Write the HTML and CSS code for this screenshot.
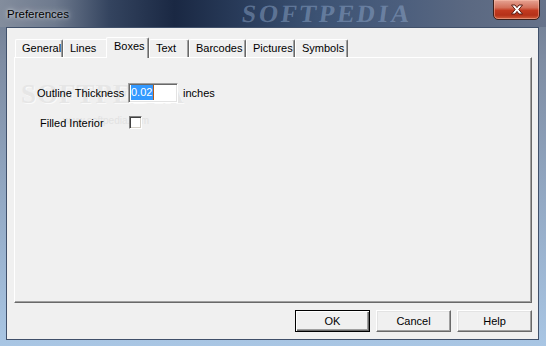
FILE: index.html
```html
<!DOCTYPE html>
<html lang="en">
<head>
    <meta charset="UTF-8">
    <title>Preferences</title>
    <link rel="stylesheet" href="styles.css">
</head>
<body>

    <div class="window">
        <!-- Title bar -->
        <div class="titlebar">
            <span class="title">Preferences</span>
            <span class="brand-mark">SOFTPEDIA</span>
            <div class="close-btn">
                <svg width="14" height="11" viewBox="0 0 14 11">
                    <path d="M1.5 1 L5 1 L7 3.6 L9 1 L12.5 1 L8.8 5.5 L12.5 10 L9 10 L7 7.4 L5 10 L1.5 10 L5.2 5.5 Z" fill="#fff" stroke="#5a1a10" stroke-width="1"/>
                </svg>
            </div>
        </div>

        <div class="client">
            <!-- Tabs -->
            <div class="tabs">
                <div class="tab tab-general">General</div>
                <div class="tab tab-lines">Lines</div>
                <div class="tab tab-boxes active">Boxes</div>
                <div class="tab tab-text">Text</div>
                <div class="tab tab-barcodes">Barcodes</div>
                <div class="tab tab-pictures">Pictures</div>
                <div class="tab tab-symbols">Symbols</div>
            </div>

            <div class="panel">
                <span class="watermark">SOFTPEDIA</span>
                <span class="watermark-url">www.softpedia.com</span>

                <div class="field-row">
                    <label class="field-label">Outline Thickness</label>
                    <div class="textbox"><span class="selected">0.02</span></div>
                    <span class="unit">inches</span>
                </div>

                <div class="check-row">
                    <label class="check-label">Filled Interior</label>
                    <span class="checkbox"></span>
                </div>
            </div>

            <!-- Dialog buttons -->
            <div class="buttons">
                <button class="btn default">OK</button>
                <button class="btn">Cancel</button>
                <button class="btn">Help</button>
            </div>
        </div>
    </div>

</body>
</html>
```

FILE: styles.css
```css
body {
    margin: 0;
    padding: 0;
    width: 546px;
    height: 346px;
    overflow: hidden;
    font-family: 'Liberation Sans', Arial, sans-serif;
    font-size: 11px;
    color: #000;
}
.window {
    width: 546px;
    height: 346px;
    display: flex;
    flex-direction: column;
    background: linear-gradient(to bottom, #6e7b90 0px, #7e8ca2 60px, #93a9c4 200px, #a9c6e4 346px);
}
.titlebar {
    position: relative;
    height: 27px;
    background: linear-gradient(to right, #838d9d 0%, #6e7a8e 10%, #34445f 20%, #1a2843 32%, #2a3d5c 45%, #3c5273 58%, #4a5d7c 72%, #5b6982 86%, #66728a 100%);
    display: flex;
    align-items: center;
}
.title {
    margin-left: 7px;
    font-size: 11.5px;
    color: #000;
    text-shadow: 0 0 6px rgba(255,255,255,0.7), 0 0 3px rgba(255,255,255,0.5);
}
.brand-mark {
    position: absolute;
    left: 242px;
    top: 1px;
    line-height: 26px;
    font-family: 'Liberation Serif', serif;
    font-weight: bold;
    font-size: 25px;
    letter-spacing: 3px;
    color: rgba(150,175,210,0.45);
    transform: skewX(-8deg);
}
.close-btn {
    position: absolute;
    left: 493px;
    top: -1px;
    width: 45px;
    height: 19px;
    border: 1px solid #3b1f1a;
    border-radius: 0 0 5px 5px;
    background: linear-gradient(to bottom, #e6a393 0%, #d3705a 40%, #c23a20 55%, #b53118 80%, #d0603e 100%);
    box-shadow: inset 0 0 0 1px rgba(255,200,180,0.45);
    display: flex;
    align-items: center;
    justify-content: center;
}
.client {
    flex: 1;
    margin: 0 7px 6px 6px;
    background-color: #f0f0f0;
    border: 1px solid #40506a;
    display: flex;
    flex-direction: column;
    padding: 8px 6px 0 7px;
}
.tabs {
    display: flex;
    align-items: flex-end;
    height: 21px;
    padding-left: 1px;
    position: relative;
    z-index: 1;
}
.tab {
    box-sizing: border-box;
    height: 18px;
    line-height: 17px;
    padding-left: 6px;
    border-top: 1px solid #fff;
    border-left: 1px solid #fff;
    border-right: 1px solid #696969;
    box-shadow: inset -1px 0 #a0a0a0;
    border-radius: 2px 2px 0 0;
    white-space: nowrap;
}
.tab.active {
    height: 21px;
    line-height: 17px;
    margin-bottom: -1px;
    background-color: #f0f0f0;
    padding-left: 7px;
}
.tab-general { width: 48px; }
.tab-lines { width: 45px; border-right: none; box-shadow: none; margin-right: -2px; }
.tab-boxes { width: 43px; }
.tab-text { width: 40px; }
.tab-barcodes { width: 57px; }
.tab-pictures { width: 49px; }
.tab-symbols { width: 53px; }
.panel {
    position: relative;
    height: 246px;
    box-sizing: border-box;
    border-top: 1px solid #fff;
    border-left: 1px solid #fff;
    border-right: 1px solid #696969;
    border-bottom: 1px solid #696969;
    box-shadow: inset -1px -1px #a0a0a0;
    padding: 25px 0 0 22px;
}
.watermark {
    position: absolute;
    left: 6px;
    top: 21px;
    font-family: 'Liberation Serif', serif;
    font-weight: bold;
    font-size: 27px;
    letter-spacing: 1px;
    color: #e6e6e6;
    text-shadow: 1px 1px 0 #fafafa;
}
.watermark-url {
    position: absolute;
    left: 48px;
    top: 57px;
    font-size: 10px;
    color: #e2e2e2;
}
.field-row {
    position: relative;
    display: flex;
    align-items: center;
    height: 20px;
}
.field-label {
    width: 91px;
}
.textbox {
    box-sizing: content-box;
    width: 46px;
    height: 17px;
    background: #fff;
    border: 1px solid;
    border-color: #a0a0a0 #fff #fff #a0a0a0;
    box-shadow: inset 1px 1px #696969, inset -1px -1px #e3e3e3;
    padding: 1px 0 0 2px;
}
.selected {
    display: inline-block;
    background-color: #3399ff;
    color: #fff;
    line-height: 15px;
    padding-right: 1px;
    border-right: 1px solid #b35a16;
}
.unit {
    margin-left: 5px;
}
.check-row {
    position: relative;
    display: flex;
    align-items: center;
    margin-top: 13px;
    padding-left: 3px;
    height: 13px;
}
.check-label {
    width: 89px;
}
.checkbox {
    width: 11px;
    height: 11px;
    background: #fff;
    border: 1px solid;
    border-color: #808080 #fff #fff #808080;
    box-shadow: inset 1px 1px #404040, inset -1px -1px #d4d0c8;
}
.buttons {
    display: flex;
    justify-content: flex-end;
    gap: 6px;
    margin-top: 7px;
}
.btn {
    width: 75px;
    height: 22px;
    font-family: 'Liberation Sans', Arial, sans-serif;
    font-size: 11px;
    color: #000;
    background-color: #f0f0f0;
    border: 1px solid;
    border-color: #fff #696969 #696969 #fff;
    box-shadow: inset -1px -1px #a0a0a0, inset 1px 1px #e3e3e3;
    padding: 0;
}
.btn.default {
    border-color: #000;
    box-shadow: inset 1px 1px #fff, inset -1px -1px #696969, inset -2px -2px #a0a0a0;
}
```
